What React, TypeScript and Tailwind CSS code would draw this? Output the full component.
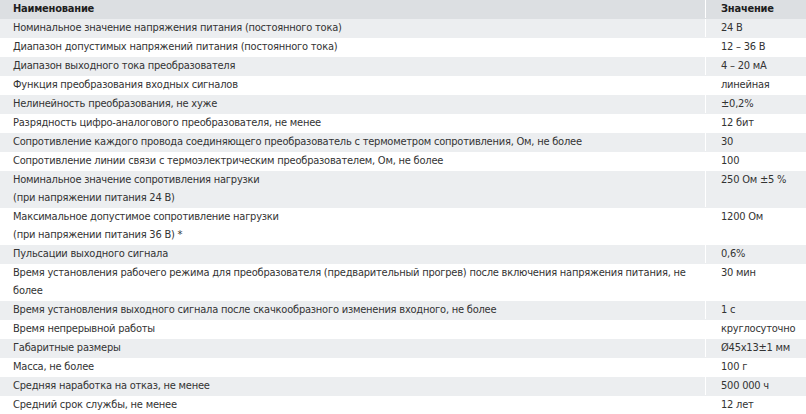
import React from "react";

type Row = { name: React.ReactNode; value: string };

const rows: Row[] = [
  { name: "Номинальное значение напряжения питания (постоянного тока)", value: "24 В" },
  { name: "Диапазон допустимых напряжений питания (постоянного тока)", value: "12 – 36 В" },
  { name: "Диапазон выходного тока преобразователя", value: "4 – 20 мА" },
  { name: "Функция преобразования входных сигналов", value: "линейная" },
  { name: "Нелинейность преобразования, не хуже", value: "±0,2%" },
  { name: "Разрядность цифро-аналогового преобразователя, не менее", value: "12 бит" },
  { name: "Сопротивление каждого провода соединяющего преобразователь с термометром сопротивления, Ом, не более", value: "30" },
  { name: "Сопротивление линии связи с термоэлектрическим преобразователем, Ом, не более", value: "100" },
  {
    name: (
      <>
        Номинальное значение сопротивления нагрузки
        <br />
        (при напряжении питания 24 В)
      </>
    ),
    value: "250 Ом ±5 %",
  },
  {
    name: (
      <>
        Максимальное допустимое сопротивление нагрузки
        <br />
        (при напряжении питания 36 В) *
      </>
    ),
    value: "1200 Ом",
  },
  { name: "Пульсации выходного сигнала", value: "0,6%" },
  {
    name: (
      <>
        Время установления рабочего режима для преобразователя (предварительный прогрев) после включения напряжения питания, не
        <br />
        более
      </>
    ),
    value: "30 мин",
  },
  { name: "Время установления выходного сигнала после скачкообразного изменения входного, не более", value: "1 с" },
  { name: "Время непрерывной работы", value: "круглосуточно" },
  { name: "Габаритные размеры", value: "Ø45x13±1 мм" },
  { name: "Масса, не более", value: "100 г" },
  { name: "Средняя наработка на отказ, не менее", value: "500 000 ч" },
  { name: "Средний срок службы, не менее", value: "12 лет" },
];

export default function App() {
  return (
    <div className="w-[806px] bg-white font-['DejaVu_Sans_Condensed','DejaVu_Sans',sans-serif] text-[11px] leading-[18px] tracking-[-0.22px] text-[#333]">
      <div className="flex bg-[#dcdfe2] pb-px font-bold text-[#1e1e1e]">
        <div className="w-[706px] shrink-0 border-r border-white pl-[13px]">Наименование</div>
        <div className="flex-1 pl-[15px] whitespace-nowrap">Значение</div>
      </div>
      {rows.map((r, i) => (
        <div key={i} className={`flex pb-px ${i % 2 === 0 ? "bg-[#eceef0]" : "bg-white"}`}>
          <div className="w-[706px] shrink-0 whitespace-nowrap border-r border-white pl-[13px]">{r.name}</div>
          <div className="flex-1 whitespace-nowrap pl-[15px]">{r.value}</div>
        </div>
      ))}
    </div>
  );
}
